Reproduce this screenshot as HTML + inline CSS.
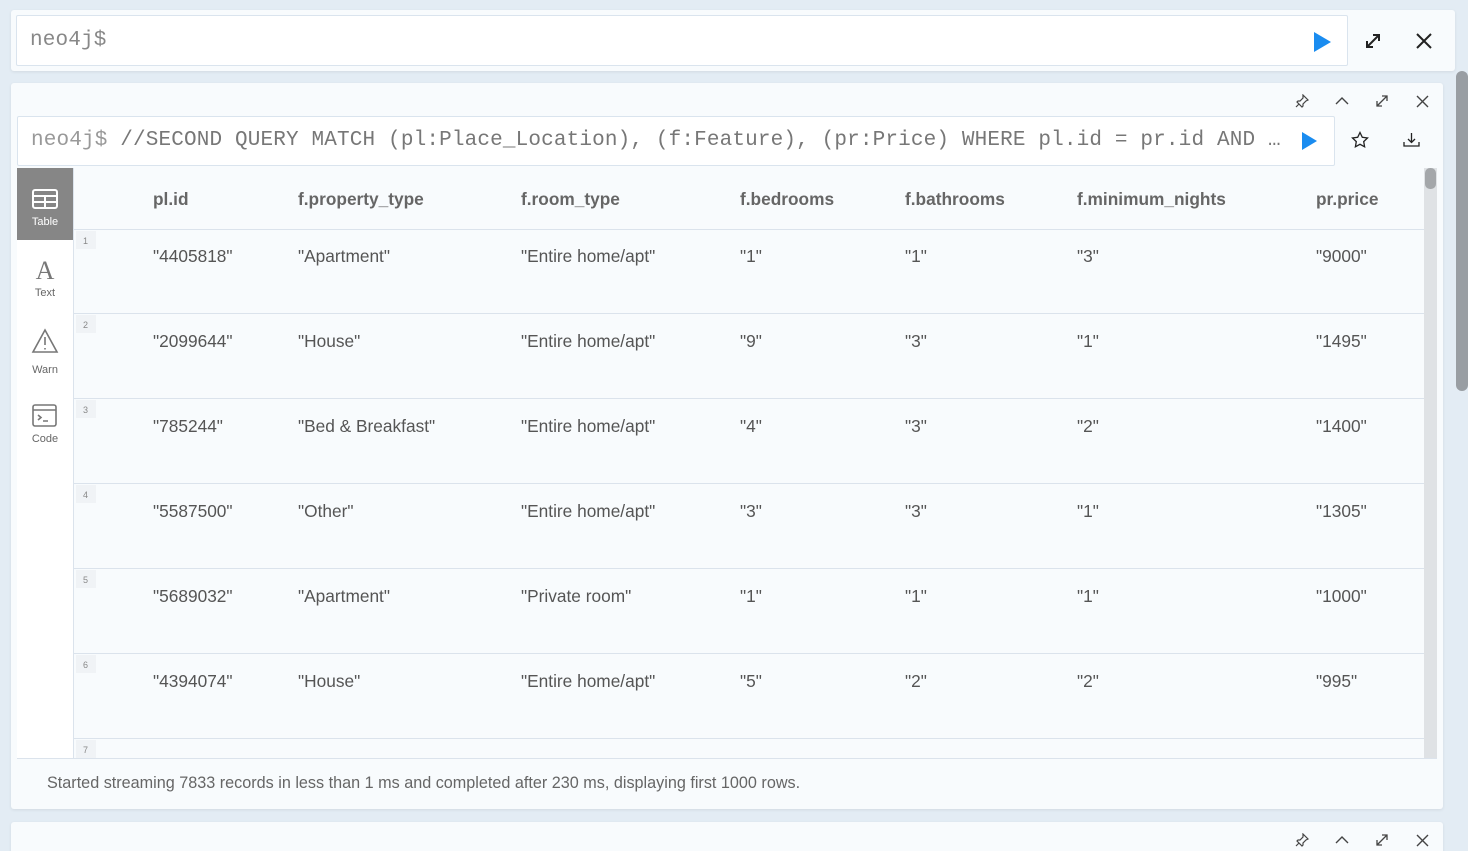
<!DOCTYPE html>
<html><head><meta charset="utf-8"><style>
*{box-sizing:border-box;margin:0;padding:0}
html,body{width:1468px;height:851px;overflow:hidden}
body{background:#e3ecf4;font-family:"Liberation Sans",sans-serif;position:relative}
.card{position:absolute;background:#f8fbfd;border-radius:3px;box-shadow:0 1px 3px rgba(0,0,0,.08)}
.box{position:absolute;background:#fff;border:1px solid #dae4ee;border-radius:2px}
.mono{font-family:"Liberation Mono",monospace;font-size:21px;color:#777;white-space:nowrap;position:absolute;letter-spacing:0.15px}
svg{position:absolute}
.hd,.cell{position:absolute;font-size:17.3px;color:#555;white-space:nowrap}
.hd{font-weight:bold;color:#666}
.line{position:absolute;left:74px;width:1350px;height:1px;background:#dbe3ec}
.num{position:absolute;left:76px;width:20px;height:18px;background:#f0f3f6;font-size:9px;color:#888;padding:5px 0 0 7px}
.side{position:absolute;left:17px;width:56px;text-align:center;font-size:11px;color:#666}
</style></head><body>
<div class="card" style="left:11px;top:10px;width:1444px;height:61px"></div>
<div class="box" style="left:16px;top:15px;width:1332px;height:51px"></div>
<div class="mono" style="left:30px;top:29px;color:#888">neo4j$</div>
<svg style="left:1312px;top:31px" width="20" height="22"><path d="M2 1 L19 11 L2 21Z" fill="#1a8cf0"/></svg>
<svg style="left:1364px;top:32px" width="18" height="18" stroke="#222" stroke-width="2" fill="none"><path d="M3 15 L15 3 M9 3h6v6 M3 9v6h6"/></svg>
<svg style="left:1416px;top:33px" width="16" height="16" stroke="#222" stroke-width="2"><path d="M1 1L15 15M15 1L1 15"/></svg>

<div style="position:absolute;left:1456px;top:71px;width:12px;height:320px;background:#999ea3;border-radius:6px"></div>

<div class="card" style="left:11px;top:83px;width:1432px;height:726px"></div>
<svg style="left:1295px;top:94px" width="14" height="14" stroke="#444" stroke-width="1.2" fill="none"><path d="M8 1l5 5-2 1-3 3 0 2-1 1-5-5 1-1 2 0 3-3z M4 10 L1 13"/></svg>
<svg style="left:1335px;top:96px" width="14" height="10" stroke="#444" stroke-width="1.4" fill="none"><path d="M1 8 L7 2 L13 8"/></svg>
<svg style="left:1375px;top:94px" width="14" height="14" stroke="#444" stroke-width="1.3" fill="none"><path d="M2 12 L12 2 M7 2h5v5 M2 7v5h5"/></svg>
<svg style="left:1416px;top:95px" width="13" height="13" stroke="#444" stroke-width="1.4"><path d="M1 1L12 12M12 1L1 12"/></svg>

<div class="box" style="left:17px;top:116px;width:1318px;height:50px"></div>
<div class="mono" style="left:31px;top:129px"><span style="color:#999">neo4j$</span> //SECOND QUERY MATCH (pl:Place_Location), (f:Feature), (pr:Price) WHERE pl.id = pr.id AND …</div>
<svg style="left:1300px;top:131px" width="18" height="20"><path d="M2 1 L17 10 L2 19Z" fill="#1a8cf0"/></svg>
<svg style="left:1351px;top:131px" width="18" height="18" stroke="#222" stroke-width="1.3" fill="none"><path d="M9 1.5l2.3 4.8 5.2.7-3.8 3.6.9 5.2L9 13.3l-4.6 2.5.9-5.2L1.5 7l5.2-.7z"/></svg>
<svg style="left:1403px;top:132px" width="17" height="16" stroke="#222" stroke-width="1.3" fill="none"><path d="M8.5 1v9 M5 7l3.5 3.5L12 7 M1 10v4h15v-4"/></svg>

<div style="position:absolute;left:17px;top:168px;width:56px;height:590px;background:#fff"></div>
<div style="position:absolute;left:73px;top:168px;width:1px;height:590px;background:#dbe3ec"></div>
<div style="position:absolute;left:17px;top:168px;width:56px;height:72px;background:#868686"></div>
<svg style="left:32px;top:189px" width="26" height="20" stroke="#fff" stroke-width="2" fill="none"><rect x="1" y="1" width="24" height="18" rx="2"/><path d="M1 7h24M1 13h24M13 7v12"/></svg>
<div class="side" style="top:216px;color:#fff">Table</div>
<div class="side" style="top:256px;font-size:26px;font-family:'Liberation Serif',serif;color:#777">A</div>
<div class="side" style="top:287px">Text</div>
<svg style="left:31px;top:328px" width="28" height="26" stroke="#777" stroke-width="1.6" fill="none"><path d="M14 2L26 24H2Z M14 9v8 M14 20v1.5"/></svg>
<div class="side" style="top:364px">Warn</div>
<svg style="left:32px;top:404px" width="25" height="23" stroke="#777" stroke-width="1.6" fill="none"><rect x="1" y="1" width="23" height="21" rx="2"/><path d="M1 6h23 M6 11l3 2.5-3 2.5 M11 17h5"/></svg>
<div class="side" style="top:433px">Code</div>

<div style="position:absolute;left:1424px;top:168px;width:13px;height:590px;background:#dfe2e5"></div>
<div style="position:absolute;left:1425px;top:168px;width:11px;height:21px;background:#a4a7aa;border-radius:5px"></div>

<div class="hd" style="left:153px;top:189px">pl.id</div>
<div class="hd" style="left:298px;top:189px">f.property_type</div>
<div class="hd" style="left:521px;top:189px">f.room_type</div>
<div class="hd" style="left:740px;top:189px">f.bedrooms</div>
<div class="hd" style="left:905px;top:189px">f.bathrooms</div>
<div class="hd" style="left:1077px;top:189px">f.minimum_nights</div>
<div class="hd" style="left:1316px;top:189px">pr.price</div>

<div class="line" style="top:229px"></div>
<div class="num" style="top:231px">1</div>
<div class="cell" style="left:153px;top:246px">"4405818"</div><div class="cell" style="left:298px;top:246px">"Apartment"</div><div class="cell" style="left:521px;top:246px">"Entire home/apt"</div><div class="cell" style="left:740px;top:246px">"1"</div><div class="cell" style="left:905px;top:246px">"1"</div><div class="cell" style="left:1077px;top:246px">"3"</div><div class="cell" style="left:1316px;top:246px">"9000"</div>
<div class="line" style="top:313px"></div>
<div class="num" style="top:315px">2</div>
<div class="cell" style="left:153px;top:331px">"2099644"</div><div class="cell" style="left:298px;top:331px">"House"</div><div class="cell" style="left:521px;top:331px">"Entire home/apt"</div><div class="cell" style="left:740px;top:331px">"9"</div><div class="cell" style="left:905px;top:331px">"3"</div><div class="cell" style="left:1077px;top:331px">"1"</div><div class="cell" style="left:1316px;top:331px">"1495"</div>
<div class="line" style="top:398px"></div>
<div class="num" style="top:400px">3</div>
<div class="cell" style="left:153px;top:416px">"785244"</div><div class="cell" style="left:298px;top:416px">"Bed &amp; Breakfast"</div><div class="cell" style="left:521px;top:416px">"Entire home/apt"</div><div class="cell" style="left:740px;top:416px">"4"</div><div class="cell" style="left:905px;top:416px">"3"</div><div class="cell" style="left:1077px;top:416px">"2"</div><div class="cell" style="left:1316px;top:416px">"1400"</div>
<div class="line" style="top:483px"></div>
<div class="num" style="top:485px">4</div>
<div class="cell" style="left:153px;top:501px">"5587500"</div><div class="cell" style="left:298px;top:501px">"Other"</div><div class="cell" style="left:521px;top:501px">"Entire home/apt"</div><div class="cell" style="left:740px;top:501px">"3"</div><div class="cell" style="left:905px;top:501px">"3"</div><div class="cell" style="left:1077px;top:501px">"1"</div><div class="cell" style="left:1316px;top:501px">"1305"</div>
<div class="line" style="top:568px"></div>
<div class="num" style="top:570px">5</div>
<div class="cell" style="left:153px;top:586px">"5689032"</div><div class="cell" style="left:298px;top:586px">"Apartment"</div><div class="cell" style="left:521px;top:586px">"Private room"</div><div class="cell" style="left:740px;top:586px">"1"</div><div class="cell" style="left:905px;top:586px">"1"</div><div class="cell" style="left:1077px;top:586px">"1"</div><div class="cell" style="left:1316px;top:586px">"1000"</div>
<div class="line" style="top:653px"></div>
<div class="num" style="top:655px">6</div>
<div class="cell" style="left:153px;top:671px">"4394074"</div><div class="cell" style="left:298px;top:671px">"House"</div><div class="cell" style="left:521px;top:671px">"Entire home/apt"</div><div class="cell" style="left:740px;top:671px">"5"</div><div class="cell" style="left:905px;top:671px">"2"</div><div class="cell" style="left:1077px;top:671px">"2"</div><div class="cell" style="left:1316px;top:671px">"995"</div>
<div class="line" style="top:738px"></div>
<div class="num" style="top:740px">7</div>
<div style="position:absolute;left:17px;top:758px;width:1420px;height:1px;background:#dbe3ec"></div>
<div style="position:absolute;left:47px;top:774px;font-size:16.2px;color:#666">Started streaming 7833 records in less than 1 ms and completed after 230 ms, displaying first 1000 rows.</div>

<div class="card" style="left:11px;top:822px;width:1432px;height:40px"></div>
<svg style="left:1295px;top:833px" width="14" height="14" stroke="#444" stroke-width="1.2" fill="none"><path d="M8 1l5 5-2 1-3 3 0 2-1 1-5-5 1-1 2 0 3-3z M4 10 L1 13"/></svg>
<svg style="left:1335px;top:835px" width="14" height="10" stroke="#444" stroke-width="1.4" fill="none"><path d="M1 8 L7 2 L13 8"/></svg>
<svg style="left:1375px;top:833px" width="14" height="14" stroke="#444" stroke-width="1.3" fill="none"><path d="M2 12 L12 2 M7 2h5v5 M2 7v5h5"/></svg>
<svg style="left:1416px;top:834px" width="13" height="13" stroke="#444" stroke-width="1.4"><path d="M1 1L12 12M12 1L1 12"/></svg>
</body></html>
